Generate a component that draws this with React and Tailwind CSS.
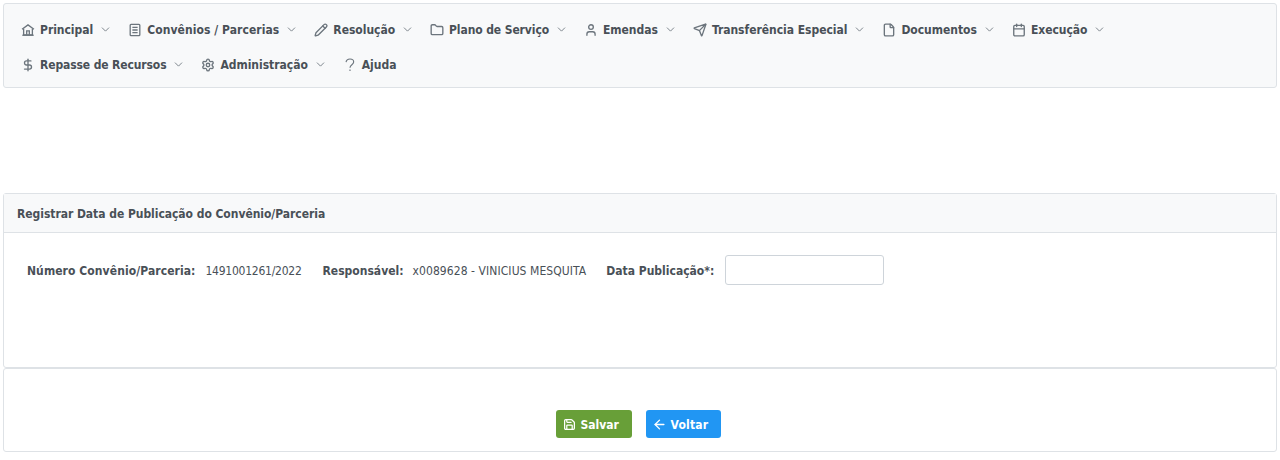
import { ArrowLeft, Calendar, ChevronDown, DollarSign, File, Folder, Pencil, Save, Send, Settings, User } from "lucide-react"

function HomeIcon({ className }) {
  return (
    <svg viewBox="0 0 16 16" fill="none" stroke="currentColor" strokeWidth="1.5" className={className}>
      <path d="M1.2 7.2 8 2.2 14.8 7.2" />
      <path d="M3 6.5V13.5H13V6.5" />
      <path d="M6.5 13.5V9H9.5V13.5" />
      <path d="M1.5 14H14.5" />
    </svg>
  )
}

function BookIcon({ className }) {
  return (
    <svg viewBox="0 0 16 16" fill="none" stroke="currentColor" strokeWidth="1.5" className={className}>
      <rect x="2.5" y="1.5" width="11" height="13" rx="1" />
      <path d="M5 5H11M5 8H11M5 11H11" />
    </svg>
  )
}

function QuestionIcon({ className }) {
  return (
    <svg viewBox="0 0 16 16" fill="none" stroke="currentColor" strokeWidth="1.3" className={className}>
      <path d="M3.5 4.8C3.8 2.6 5.8 1.2 8 1.2c2.4 0 4.2 1.5 4.2 3.4 0 3-4.2 3.2-4.2 6.4" />
      <path d="M8 13v1.8" />
    </svg>
  )
}

const row1 = [
  { label: "Principal", icon: HomeIcon },
  { label: "Convênios / Parcerias", icon: BookIcon, spacing: "tracking-[0.07px]" },
  { label: "Resolução", icon: Pencil },
  { label: "Plano de Serviço", icon: Folder, spacing: "tracking-[-0.1px]" },
  { label: "Emendas", icon: User },
  { label: "Transferência Especial", icon: Send },
  { label: "Documentos", icon: File },
  { label: "Execução", icon: Calendar },
]

const row2 = [
  { label: "Repasse de Recursos", icon: DollarSign, spacing: "tracking-[-0.12px]" },
  { label: "Administração", icon: Settings },
]

function MenuItem({ label, icon: Icon, arrow = true, spacing = "tracking-[-0.03px]" }) {
  return (
    <a className="flex items-center h-[35px] px-[8px] text-[#495057] font-bold text-[12px] whitespace-nowrap">
      <Icon className="w-[14px] h-[14px] mr-[5px] text-[#6c757d]" strokeWidth={2.3} />
      <span className={spacing}>{label}</span>
      {arrow && <ChevronDown className="w-[13px] h-[13px] ml-[6px] text-[#6c757d]" strokeWidth={1.6} />}
    </a>
  )
}

export default function App() {
  return (
    <div className="h-[460px] bg-white p-[3px] font-['DejaVu_Sans',sans-serif] font-stretch-condensed text-[#495057] overflow-hidden">
      {/* Menu */}
      <div className="h-[85px] bg-[#f8f9fa] border border-[#dee2e6] rounded-[3px] px-[9px] py-[8px]">
        <div className="flex flex-wrap">
          {row1.map((item) => (
            <MenuItem key={item.label} {...item} />
          ))}
          <div className="basis-full h-0" />
          {row2.map((item) => (
            <MenuItem key={item.label} {...item} />
          ))}
          <MenuItem label="Ajuda" icon={QuestionIcon} arrow={false} />
        </div>
      </div>

      {/* Formulario */}
      <div className="mt-[105px] h-[175px] border border-[#dee2e6] rounded-[3px]">
        <div className="h-[39px] flex items-center px-[13px] pt-[2px] bg-[#f8f9fa] border-b border-[#dee2e6] text-[12px] tracking-[-0.04px] font-bold">
          Registrar Data de Publicação do Convênio/Parceria
        </div>
        <div className="flex items-center pl-[23px] pt-[22px] text-[12px]">
          <div className="flex items-center pt-[2px]">
            <span className="font-bold tracking-[0.08px]">Número Convênio/Parceria:</span>
            <span className="ml-[10px] tracking-[-0.25px]">1491001261/2022</span>
            <span className="ml-[21px] font-bold">Responsável:</span>
            <span className="ml-[9px] tracking-[0.08px]">x0089628 - VINICIUS MESQUITA</span>
            <span className="ml-[20px] font-bold">Data Publicação*:</span>
          </div>
          <input className="ml-[11px] w-[159px] h-[30px] bg-white border border-[#ced4da] rounded-[3px]" />
        </div>
      </div>

      {/* Botoes */}
      <div className="h-[84px] border border-[#dee2e6] rounded-[3px] flex justify-center items-end gap-[14px] pb-[13px] pr-[4px]">
        <button className="flex items-center h-[28px] w-[76px] pl-[7px] pt-[1px] bg-[#689f38] text-white rounded-[3px] text-[12px] font-bold">
          <Save className="w-[13px] h-[13px] mr-[5px] -mt-[1px]" strokeWidth={2.3} />
          Salvar
        </button>
        <button className="flex items-center h-[28px] w-[75px] pl-[6px] pt-[1px] bg-[#2196f3] text-white rounded-[3px] text-[12px] font-bold tracking-[0.2px]">
          <ArrowLeft className="w-[15px] h-[15px] mr-[4px] -mt-[1px]" strokeWidth={2.2} />
          Voltar
        </button>
      </div>
    </div>
  )
}
